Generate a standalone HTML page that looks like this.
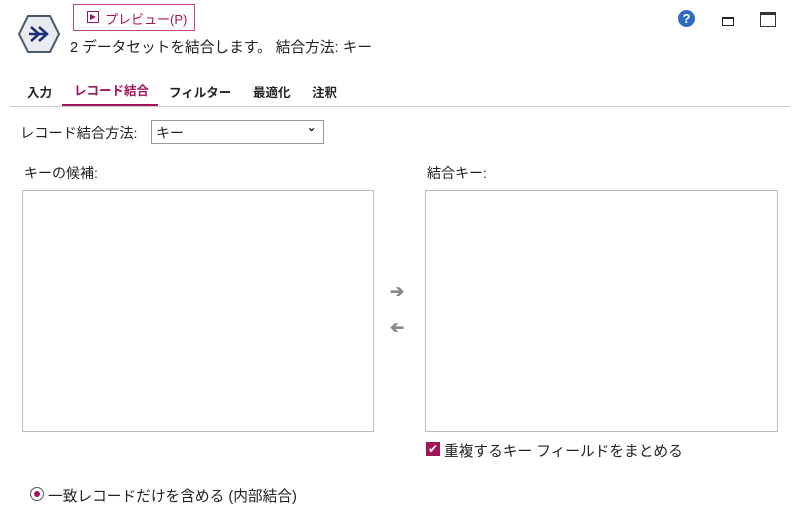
<!DOCTYPE html>
<html><head><meta charset="utf-8"><style>
body{margin:0;width:800px;height:512px;background:#fff;font-family:"Liberation Sans","Noto Sans CJK JP",sans-serif;color:#222;position:relative;overflow:hidden}
.a{position:absolute;white-space:nowrap}
.box{position:absolute;border:1px solid #bbb;background:#fff}
</style></head><body>
<svg class="a" style="left:17px;top:14px" width="44" height="40" viewBox="0 0 44 40"><polygon points="11,2 33,2 42,20 33,38 11,38 2,20" fill="#e9ecef" stroke="#4a5a6a" stroke-width="2"/><path d="M12 20H30M22 13l8 7-8 7M14 13l8 7-8 7" stroke="#1c2e7a" stroke-width="2.5" fill="none"/></svg>
<div class="a" style="left:73px;top:4px;width:122px;height:27px;border:1px solid #c0457a;box-sizing:border-box"></div>
<div class="a" style="left:87px;top:11px;width:12px;height:12px;border:1px solid #a0155a;box-sizing:border-box"></div>
<div class="a" style="left:90px;top:13.5px;width:0;height:0;border-left:6px solid #a0155a;border-top:3.5px solid transparent;border-bottom:3.5px solid transparent"></div>
<div class="a" style="left:105px;top:9px;font-size:13px;color:#a0155a">プレビュー(P)</div>
<div class="a" style="left:70px;top:36px;font-size:14.7px">2 データセットを結合します。 結合方法: キー</div>
<div class="a" style="left:678px;top:10px;width:17px;height:17px;border-radius:50%;background:#2f6bbf;color:#fff;font-size:13px;font-weight:bold;text-align:center;line-height:17px">?</div>
<div class="a" style="left:722px;top:17px;width:10px;height:6px;border:1px solid #222;border-top-width:2px"></div>
<div class="a" style="left:760px;top:12px;width:14px;height:11px;border:1px solid #333;border-top-width:3px"></div>
<div class="a" style="left:27px;top:82px;font-size:12.5px;font-weight:bold">入力</div>
<div class="a" style="left:74px;top:80px;font-size:12.5px;font-weight:bold;color:#a0155a">レコード結合</div>
<div class="a" style="left:62px;top:104px;width:96px;height:3px;background:#a0155a"></div>
<div class="a" style="left:169px;top:82px;font-size:12.5px;font-weight:bold">フィルター</div>
<div class="a" style="left:253px;top:82px;font-size:12.5px;font-weight:bold">最適化</div>
<div class="a" style="left:312px;top:82px;font-size:12.5px;font-weight:bold">注釈</div>
<div class="a" style="left:10px;top:106px;width:780px;height:1px;background:#ccc"></div>
<div class="a" style="left:20px;top:123px;font-size:14.2px">レコード結合方法:</div>
<div class="box" style="left:151px;top:120px;width:171px;height:22px;border-color:#999"></div>
<div class="a" style="left:156px;top:123px;font-size:14px">キー</div>
<div class="a" style="left:307px;top:121px;font-size:11px;font-weight:bold">⌄</div>
<div class="a" style="left:24px;top:163px;font-size:14px">キーの候補:</div>
<div class="a" style="left:427px;top:163px;font-size:14px">結合キー:</div>
<div class="box" style="left:22px;top:190px;width:350px;height:240px"></div>
<div class="box" style="left:425px;top:190px;width:351px;height:240px"></div>
<div class="a" style="left:390px;top:282px;font-size:17px;color:#888;font-weight:bold">➔</div>
<div class="a" style="left:390px;top:318px;font-size:17px;color:#888;font-weight:bold;transform:scaleX(-1)">➔</div>
<div class="a" style="left:426px;top:442px;width:14px;height:14px;background:#a0155a;color:#fff;font-size:12px;text-align:center;line-height:14px">✔</div>
<div class="a" style="left:444px;top:440px;font-size:14.7px">重複するキー フィールドをまとめる</div>
<div class="a" style="left:30px;top:487px;width:12px;height:12px;border:1px solid #555;border-radius:50%"></div>
<div class="a" style="left:34px;top:491px;width:6px;height:6px;background:#a0155a;border-radius:50%"></div>
<div class="a" style="left:48px;top:485px;font-size:14.7px">一致レコードだけを含める (内部結合)</div>
</body></html>
